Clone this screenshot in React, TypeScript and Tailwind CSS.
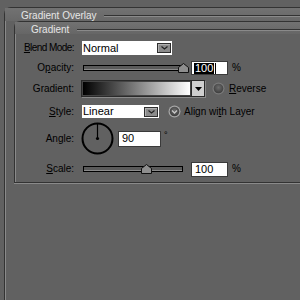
import React from "react";

const font = "font-['Liberation_Sans',Arial,sans-serif]";

function Mn({ children }: { children: React.ReactNode }) {
  return <span className="underline underline-offset-[1px]">{children}</span>;
}

function Label({ children, tight }: { children: React.ReactNode; tight?: boolean }) {
  return (
    <div
      className={`w-[60px] shrink-0 pr-[1px] text-right text-[10px] leading-none text-black ${
        tight ? "tracking-[-0.55px]" : ""
      }`}
    >
      {children}
    </div>
  );
}

function DropButton() {
  return (
    <div className="flex h-[10px] w-[14px] items-center justify-center border border-[#2e2e2e] bg-[#8c8c8c] shadow-[inset_1px_1px_0_#b0b0b0]">
      <svg width="7" height="4" viewBox="0 0 7 4">
        <path d="M0.5 0.5 L3.5 3 L6.5 0.5" fill="none" stroke="#222" strokeWidth="1.2" />
      </svg>
    </div>
  );
}

function Slider({ pos }: { pos: number }) {
  return (
    <div className="relative h-[6px] w-[100px] border border-black bg-[#5a5a5a] shadow-[inset_0_-1px_0_#8a8a8a]">
      <svg
        className="absolute top-[-3px]"
        style={{ left: pos }}
        width="11"
        height="10"
        viewBox="0 0 11 10"
      >
        <path d="M0.5 9.5 V4.5 L5.5 0.5 L10.5 4.5 V9.5 Z" fill="#8e8e8e" stroke="#111" />
      </svg>
    </div>
  );
}

function NumBox({ value, w, h, selected }: { value: string; w: string; h: string; selected?: boolean }) {
  return (
    <div className={`${w} ${h} flex items-center border border-[#3a3a3a] bg-white pl-[2px] text-[11px] leading-none text-black`}>
      {selected ? <span className="bg-black px-[1px] text-white">{value}</span> : <span className="pl-[1px]">{value}</span>}
      {selected && <span className="ml-[1px] h-[11px] w-[1px] bg-black" />}
    </div>
  );
}

function Radio({ checked }: { checked?: boolean }) {
  return (
    <svg width="13" height="13" viewBox="0 0 13 13">
      <defs>
        <radialGradient id={checked ? "rg2" : "rg1"} cx="50%" cy="40%" r="60%">
          <stop offset="0%" stopColor="#6e6e6e" />
          <stop offset="100%" stopColor="#3c3c3c" />
        </radialGradient>
      </defs>
      <circle cx="6.5" cy="6.5" r="6" fill={checked ? "#a8a8a8" : "#7a7a7a"} />
      <circle cx="6.5" cy="6.5" r="4.8" fill={`url(#${checked ? "rg2" : "rg1"})`} />
      {checked && <path d="M4 5.5 L6.5 8 L9 5.5" fill="none" stroke="#c8c8c8" strokeWidth="1.3" />}
    </svg>
  );
}

export default function App() {
  return (
    <div className={`h-[300px] w-[300px] overflow-hidden bg-[#616161] pt-[7px] ${font}`}>
      {/* Outer frame */}
      <div className="ml-[4px] h-[300px] w-[310px] rounded-tl-[7px] border-l border-t border-[#333] shadow-[inset_1px_1px_0_#8a8a8a]">
        <div className="flex h-[13px] items-center bg-[linear-gradient(#727272,#686868)] pl-[16px] pt-[2px]">
          <span className="text-[10px] leading-none text-[#e6e6e6]">Gradient Overlay</span>
          <div className="ml-[7px] h-[2px] flex-1 border-t border-b border-t-[#333] border-b-[#8a8a8a]" />
        </div>

        {/* Inner panel */}
        <div className="ml-[9px] w-[300px] rounded-tl-[6px] border-l border-t border-b border-[#333] shadow-[inset_1px_1px_0_#8a8a8a,0_1px_0_#8a8a8a]">
          <div className="flex h-[12px] items-center bg-[linear-gradient(#727272,#666)] pl-[16px] pt-[3px]">
            <span className="text-[10px] leading-none text-[#e6e6e6]">Gradient</span>
            <div className="ml-[8px] h-[2px] flex-1 border-t border-b border-t-[#333] border-b-[#8a8a8a]" />
          </div>

          <div className="flex flex-col pb-[6px] pt-[7px]">
            {/* Blend mode */}
            <div className="flex h-[14px] items-center">
              <Label tight>
                <Mn>B</Mn>lend Mode:
              </Label>
              <div className="ml-[7px] flex h-[14px] w-[90px] items-center justify-between bg-white pl-[1px] pr-[1px] text-[11px] leading-none text-black">
                <span>Normal</span>
                <DropButton />
              </div>
            </div>

            {/* Opacity */}
            <div className="mt-[6px] flex h-[14px] items-center">
              <Label>
                O<Mn>p</Mn>acity:
              </Label>
              <div className="ml-[8px]">
                <Slider pos={94} />
              </div>
              <div className="ml-[8px]">
                <NumBox value="100" w="w-[37px]" h="h-[14px]" selected />
              </div>
              <span className="ml-[4px] text-[10px] leading-none text-black">%</span>
            </div>

            {/* Gradient */}
            <div className="mt-[5px] flex h-[17px] items-center">
              <Label>Gradient:</Label>
              <div className="ml-[6px] flex h-[17px] w-[124px] border border-[#2a2a2a] shadow-[1px_1px_0_#8a8a8a]">
                <div className="flex-1 border border-[#444] bg-[linear-gradient(to_right,#000,#fff)]" />
                <div className="flex w-[13px] items-center justify-center border-l border-[#2a2a2a] bg-[#cfcfcf]">
                  <svg width="7" height="4" viewBox="0 0 7 4">
                    <path d="M0 0 H7 L3.5 4 Z" fill="#000" />
                  </svg>
                </div>
              </div>
              <div className="ml-[7px] flex items-center">
                <Radio />
              </div>
              <span className="ml-[4px] text-[10px] leading-none text-black">
                <Mn>R</Mn>everse
              </span>
            </div>

            {/* Style */}
            <div className="mt-[8px] flex h-[13px] items-center">
              <Label>
                <Mn>S</Mn>tyle:
              </Label>
              <div className="ml-[7px] flex h-[13px] w-[77px] items-center justify-between bg-white pl-[1px] pr-[1px] text-[11px] leading-none text-black">
                <span>Linear</span>
                <DropButton />
              </div>
              <div className="ml-[9px] flex items-center">
                <Radio checked />
              </div>
              <span className="ml-[3px] text-[10px] leading-none text-black">
                Align wi<Mn>t</Mn>h Layer
              </span>
            </div>

            {/* Angle */}
            <div className="mt-[4px] flex h-[33px] items-center">
              <Label>
                An<Mn>g</Mn>le:
              </Label>
              <svg className="ml-[6px]" width="33" height="33" viewBox="0 0 33 33">
                <circle cx="16.5" cy="16.5" r="15" fill="none" stroke="#000" strokeWidth="2" />
                <line x1="16.5" y1="16.5" x2="16.5" y2="2" stroke="#000" strokeWidth="1.2" />
                <circle cx="16.5" cy="16.5" r="1.6" fill="#000" />
              </svg>
              <div className="ml-[4px]">
                <NumBox value="90" w="w-[43px]" h="h-[16px]" />
              </div>
              <span className="ml-[3px] mt-[9px] self-start text-[9px] leading-none text-black">°</span>
            </div>

            {/* Scale */}
            <div className="mt-[7px] flex h-[14px] items-center">
              <Label>
                <Mn>S</Mn>cale:
              </Label>
              <div className="ml-[8px]">
                <Slider pos={57} />
              </div>
              <div className="ml-[8px]">
                <NumBox value="100" w="w-[37px]" h="h-[15px]" />
              </div>
              <span className="ml-[4px] text-[10px] leading-none text-black">%</span>
            </div>
          </div>
        </div>
      </div>
    </div>
  );
}
